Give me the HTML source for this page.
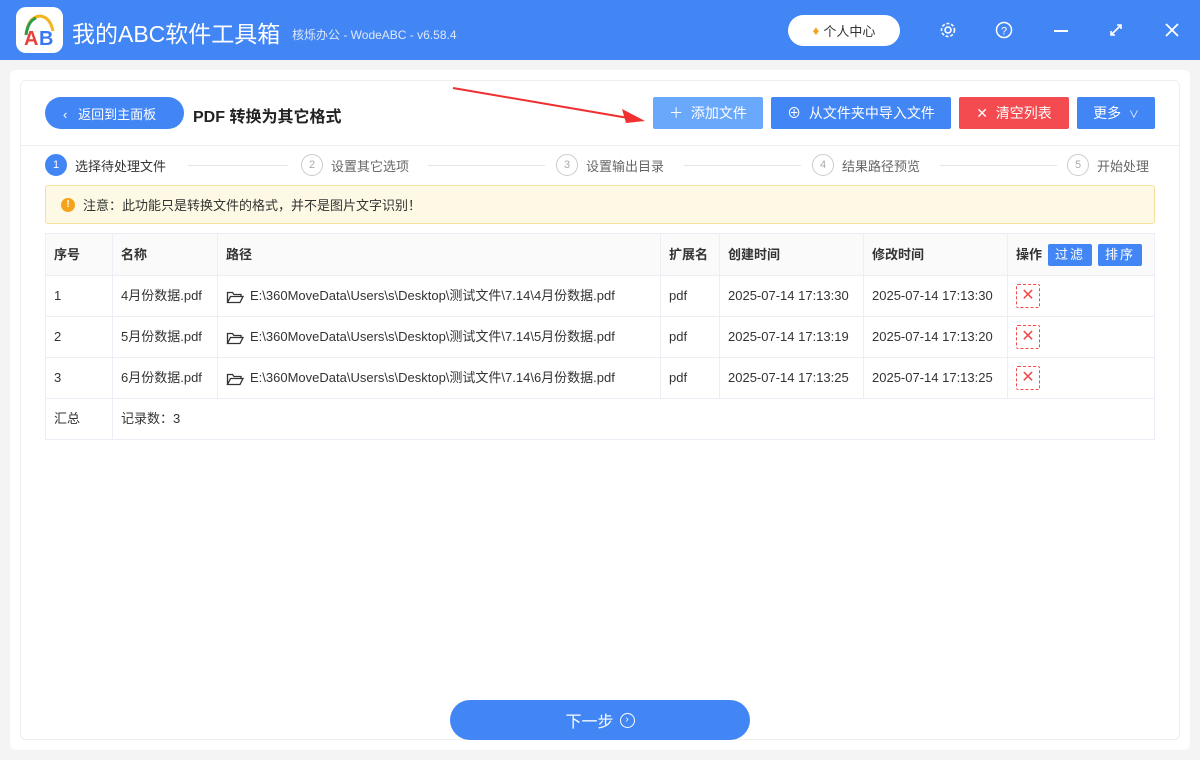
<!DOCTYPE html>
<html><head><meta charset="utf-8"><style>
*{margin:0;padding:0;box-sizing:border-box}
body{width:1200px;height:760px;background:#f4f4f4;font-family:"Liberation Sans","Noto Sans CJK SC",sans-serif;font-size:13px;color:#333;position:relative;overflow:hidden}
.abs{position:absolute}
.hdr{left:0;top:0;width:1200px;height:60px;background:#4286f5}
.btn{position:absolute;height:32px;top:97px;color:#fff;font-size:14px;display:flex;align-items:center;justify-content:center;border-radius:2px}
table{border-collapse:collapse;position:absolute;left:45px;top:233px;width:1110px;font-size:13px}
td{border:1px solid #ebeef5;padding:0 8px;height:41px;color:#333;line-height:16px;vertical-align:middle;white-space:nowrap}
tr.h td{background:#fafafa;height:42px;font-weight:bold;color:#333}
.x{display:inline-block;width:24px;height:24px;border:1px dashed #f04a4a;border-radius:2px;color:#f04a4a;text-align:center;line-height:22px;font-size:16px}
.sb{display:inline-block;background:#4286f5;color:#fff;font-weight:normal;padding:3px 7px;border-radius:2px;margin-left:6px;letter-spacing:2px}
.step{position:absolute;top:154px;display:flex;align-items:center;color:#666;font-size:13px}
.step i{font-style:normal;width:22px;height:22px;border:1px solid #ccc;border-radius:50%;display:inline-flex;align-items:center;justify-content:center;font-size:11px;color:#aaa;margin-right:8px}
.line{position:absolute;top:165px;height:1px;background:#e5e5e5}
.fo{display:inline-block;vertical-align:middle;margin-right:6px}
</style></head><body>
<div class="abs hdr"></div>
<div class="abs" style="left:16px;top:7px;width:47px;height:46px;background:#fff;border-radius:10px"><svg width="47" height="46"><path d="M10 28 Q12 10 24 9 Q34 10 37 24" stroke="#f3b51b" stroke-width="3" fill="none"/><path d="M10 28 Q12 14 20 11" stroke="#2e9c4a" stroke-width="3" fill="none"/><text x="8" y="38" font-size="20" font-weight="bold" fill="#e8403a" font-family="Liberation Sans">A</text><text x="23" y="38" font-size="20" font-weight="bold" fill="#3a78f2" font-family="Liberation Sans">B</text></svg></div>
<div class="abs" style="left:72px;top:15px;color:#fff;font-size:23px">我的ABC软件工具箱</div>
<div class="abs" style="left:292px;top:26px;color:#dfe8fb;font-size:12px">核烁办公 - WodeABC - v6.58.4</div>
<div class="abs" style="left:788px;top:15px;width:112px;height:31px;background:#fff;border-radius:16px;display:flex;align-items:center;justify-content:center;font-size:13px;color:#333"><span style="color:#f3a41b;margin-right:4px">♦</span>个人中心</div>
<svg class="abs" style="left:938px;top:20px" width="20" height="20"><circle cx="10" cy="10" r="3" stroke="#fff" fill="none" stroke-width="1.6"/><circle cx="10" cy="10" r="6.5" stroke="#fff" fill="none" stroke-width="1.6" stroke-dasharray="3 1.8"/></svg>
<svg class="abs" style="left:994px;top:20px" width="20" height="20"><circle cx="10" cy="10" r="7.5" stroke="#fff" fill="none" stroke-width="1.5"/><text x="10" y="14.5" font-size="11" fill="#fff" text-anchor="middle" font-family="Liberation Sans">?</text></svg>
<div class="abs" style="left:1054px;top:30px;width:14px;height:2px;background:#fff"></div>
<svg class="abs" style="left:1108px;top:22px" width="16" height="16"><path d="M3 13 L13 3 M9 3h4v4 M3 9v4h4" stroke="#fff" stroke-width="1.6" fill="none"/></svg>
<svg class="abs" style="left:1164px;top:22px" width="16" height="16"><path d="M2 2L14 14M14 2L2 14" stroke="#fff" stroke-width="1.8"/></svg>

<div class="abs" style="left:10px;top:70px;width:1180px;height:680px;background:#fff;border-radius:6px"></div>
<div class="abs" style="left:20px;top:80px;width:1160px;height:660px;border:1px solid #eee;border-radius:6px"></div>
<div class="abs" style="left:21px;top:145px;width:1158px;height:1px;background:#eee"></div>

<div class="abs" style="left:45px;top:97px;width:139px;height:32px;background:#4286f5;border-radius:16px;color:#fff;font-size:13px;display:flex;align-items:center;padding-left:18px">‹&nbsp;&nbsp;&nbsp;返回到主面板</div>
<div class="abs" style="left:193px;top:103px;font-size:16px;font-weight:bold;color:#222">PDF 转换为其它格式</div>

<svg class="abs" style="left:450px;top:85px" width="200" height="45"><path d="M3 3 L190 35" stroke="#f03030" stroke-width="2"/><path d="M195 36 L172 24 L176 38Z" fill="#f03030"/></svg>

<div class="btn" style="left:653px;width:110px;background:#6aa8fb">＋&nbsp; 添加文件</div>
<div class="btn" style="left:771px;width:180px;background:#4286f5">⊕&nbsp; 从文件夹中导入文件</div>
<div class="btn" style="left:959px;width:110px;background:#f34b50">✕&nbsp; 清空列表</div>
<div class="btn" style="left:1077px;width:78px;background:#4286f5">更多 &nbsp;<span style="font-size:10px">∨</span></div>

<div class="step" style="left:45px;color:#333"><i style="background:#4286f5;border-color:#4286f5;color:#fff">1</i>选择待处理文件</div>
<div class="line" style="left:188px;width:100px"></div>
<div class="step" style="left:301px"><i>2</i>设置其它选项</div>
<div class="line" style="left:428px;width:117px"></div>
<div class="step" style="left:556px"><i>3</i>设置输出目录</div>
<div class="line" style="left:684px;width:117px"></div>
<div class="step" style="left:812px"><i>4</i>结果路径预览</div>
<div class="line" style="left:940px;width:117px"></div>
<div class="step" style="left:1067px"><i>5</i>开始处理</div>

<div class="abs" style="left:45px;top:185px;width:1110px;height:39px;background:#fdf9e4;border:1px solid #f5e2a0;border-radius:3px;display:flex;align-items:center;padding-left:15px;font-size:13px;color:#333"><span style="display:inline-block;width:14px;height:14px;border-radius:50%;background:#f3a41b;color:#fff;font-size:10px;text-align:center;line-height:14px;margin-right:8px;font-weight:bold">!</span>注意：此功能只是转换文件的格式，并不是图片文字识别！</div>

<table>
<tr class="h"><td style="width:67px">序号</td><td style="width:105px">名称</td><td style="width:443px">路径</td><td style="width:59px">扩展名</td><td style="width:144px">创建时间</td><td style="width:144px">修改时间</td><td>操作<span class="sb">过滤</span><span class="sb">排序</span></td></tr>
<tr><td>1</td><td>4月份数据.pdf</td><td><svg class="fo" width="18" height="14"><path d="M1.5 12.5V2.5h5l1.5 2h7v2M1.5 12.5l3-6h12.5l-3 6z" stroke="#333" stroke-width="1.3" fill="none"/></svg>E:\360MoveData\Users\s\Desktop\测试文件\7.14\4月份数据.pdf</td><td>pdf</td><td>2025-07-14 17:13:30</td><td>2025-07-14 17:13:30</td><td><span class="x">✕</span></td></tr>
<tr><td>2</td><td>5月份数据.pdf</td><td><svg class="fo" width="18" height="14"><path d="M1.5 12.5V2.5h5l1.5 2h7v2M1.5 12.5l3-6h12.5l-3 6z" stroke="#333" stroke-width="1.3" fill="none"/></svg>E:\360MoveData\Users\s\Desktop\测试文件\7.14\5月份数据.pdf</td><td>pdf</td><td>2025-07-14 17:13:19</td><td>2025-07-14 17:13:20</td><td><span class="x">✕</span></td></tr>
<tr><td>3</td><td>6月份数据.pdf</td><td><svg class="fo" width="18" height="14"><path d="M1.5 12.5V2.5h5l1.5 2h7v2M1.5 12.5l3-6h12.5l-3 6z" stroke="#333" stroke-width="1.3" fill="none"/></svg>E:\360MoveData\Users\s\Desktop\测试文件\7.14\6月份数据.pdf</td><td>pdf</td><td>2025-07-14 17:13:25</td><td>2025-07-14 17:13:25</td><td><span class="x">✕</span></td></tr>
<tr><td style="height:39px">汇总</td><td colspan="6">记录数：3</td></tr>
</table>

<div class="abs" style="left:450px;top:700px;width:300px;height:40px;background:#4286f5;border-radius:20px;color:#fff;font-size:16px;display:flex;align-items:center;justify-content:center">下一步 <span style="display:inline-block;width:15px;height:15px;border:1.5px solid #fff;border-radius:50%;font-size:10px;line-height:12px;text-align:center;margin-left:6px">›</span></div>
</body></html>
